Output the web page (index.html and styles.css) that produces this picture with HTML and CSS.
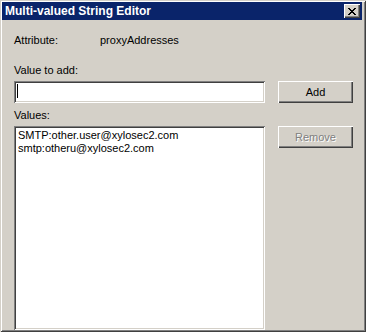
FILE: index.html
```html
<!DOCTYPE html>
<html lang="en">
<head>
    <meta charset="UTF-8">
    <title>Multi-valued String Editor</title>
    <link rel="stylesheet" href="styles.css">
</head>
<body>

<div class="window">
    <div class="titlebar">
        <span class="title">Multi-valued String Editor</span>
        <div class="close">
            <svg width="8" height="7" viewBox="0 0 8 7">
                <path d="M0 0h2v1h1v1h2v-1h1v-1h2v1h-1v1h-1v1h-1v1h1v1h1v1h1v1h-2v-1h-1v-1h-2v1h-1v1h-2v-1h1v-1h1v-1h1v-1h-1v-1h-1v-1h-1z" fill="#000"/>
            </svg>
        </div>
    </div>

    <div class="content">
        <div class="attr-row">
            <span class="attr-label">Attribute:</span>
            <span>proxyAddresses</span>
        </div>

        <div class="label add-label">Value to add:</div>
        <div class="row">
            <div class="textbox"><span class="caret"></span></div>
            <div class="button">Add</div>
        </div>

        <div class="label values-label">Values:</div>
        <div class="row list-row">
            <div class="listbox">
                <div>SMTP:other.user@xylosec2.com</div>
                <div>smtp:otheru@xylosec2.com</div>
            </div>
            <div class="button disabled">Remove</div>
        </div>
    </div>
</div>

</body>
</html>
```

FILE: styles.css
```css
* {
    box-sizing: border-box;
}

body {
    margin: 0;
    font-family: "Liberation Sans", Arial, sans-serif;
    font-size: 11px;
    line-height: 13px;
    color: #000;
}

.window {
    width: 366px;
    height: 332px;
    background-color: #d4d0c8;
    padding: 2px 4px 2px 2px;
    display: flex;
    flex-direction: column;
    box-shadow: inset 1px 1px #d4d0c8, inset -1px -1px #404040,
                inset 2px 2px #fff, inset -2px -2px #808080;
}

.titlebar {
    height: 18px;
    background-color: #0a246a;
    display: flex;
    align-items: center;
    justify-content: space-between;
    padding: 0 2px 0 3px;
}

.title {
    color: #fff;
    font-weight: bold;
    font-size: 12px;
}

.close {
    width: 16px;
    height: 14px;
    background-color: #d4d0c8;
    display: flex;
    justify-content: center;
    align-items: center;
    box-shadow: inset 1px 1px #fff, inset -1px -1px #404040, inset -2px -2px #808080;
}

.content {
    flex: 1;
    display: flex;
    flex-direction: column;
    padding: 14px 0 0 12px;
}

.attr-row {
    display: flex;
}

.attr-label {
    width: 86px;
}

.add-label {
    margin-top: 17px;
}

.values-label {
    margin-top: 6px;
}

.row {
    display: flex;
    gap: 13px;
    margin-top: 4px;
}

.textbox {
    width: 251px;
    height: 22px;
    background-color: #fff;
    padding: 3px 0 0 3px;
    box-shadow: inset 1px 1px #808080, inset -1px -1px #fff,
                inset 2px 2px #404040, inset -2px -2px #d4d0c8;
}

.caret {
    display: block;
    width: 1px;
    height: 14px;
    background-color: #000;
}

.button {
    width: 75px;
    height: 22px;
    display: flex;
    justify-content: center;
    align-items: center;
    box-shadow: inset 1px 1px #fff, inset -1px -1px #404040, inset -2px -2px #808080;
}

.button.disabled {
    color: #808080;
    text-shadow: 1px 1px #fff;
}

.list-row {
    flex: 1;
}

.listbox {
    width: 251px;
    background-color: #fff;
    padding: 3px 4px;
    box-shadow: inset 1px 1px #808080, inset -1px -1px #fff,
                inset 2px 2px #404040, inset -2px -2px #d4d0c8;
}
```
